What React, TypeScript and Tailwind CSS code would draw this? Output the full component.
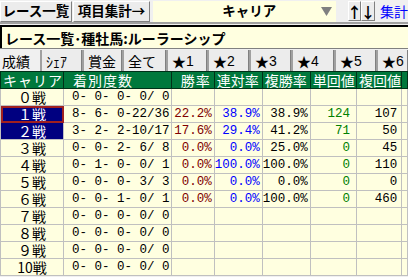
const jp = { fontFamily: '"Noto Sans CJK JP", "Noto Sans", sans-serif' };
const mono = { fontFamily: '"Liberation Mono", "DejaVu Sans Mono", monospace' };

const tabs = [
  ["成績", 40],
  ["ｼｪｱ", 42],
  ["賞金", 40],
  ["全て", 44],
  ["★1", 41],
  ["★2", 42],
  ["★3", 42],
  ["★4", 43],
  ["★5", 42],
  ["★6", 32],
] as const;

type Row = {
  label: string;
  rec: string;
  win?: string;
  ren?: string;
  fuku?: string;
  tan?: string;
  fk?: string;
  sel?: boolean;
  focus?: boolean;
};

const rows: Row[] = [
  { label: "０戦", rec: "0- 0- 0- 0/ 0" },
  { label: "１戦", rec: "8- 6- 0-22/36", win: "22.2%", ren: "38.9%", fuku: "38.9%", tan: "124", fk: "107", sel: true, focus: true },
  { label: "２戦", rec: "3- 2- 2-10/17", win: "17.6%", ren: "29.4%", fuku: "41.2%", tan: "71", fk: "50", sel: true },
  { label: "３戦", rec: "0- 0- 2- 6/ 8", win: "0.0%", ren: "0.0%", fuku: "25.0%", tan: "0", fk: "45" },
  { label: "４戦", rec: "0- 1- 0- 0/ 1", win: "0.0%", ren: "100.0%", fuku: "100.0%", tan: "0", fk: "110" },
  { label: "５戦", rec: "0- 0- 0- 3/ 3", win: "0.0%", ren: "0.0%", fuku: "0.0%", tan: "0", fk: "0" },
  { label: "６戦", rec: "0- 0- 1- 0/ 1", win: "0.0%", ren: "0.0%", fuku: "100.0%", tan: "0", fk: "460" },
  { label: "７戦", rec: "0- 0- 0- 0/ 0" },
  { label: "８戦", rec: "0- 0- 0- 0/ 0" },
  { label: "９戦", rec: "0- 0- 0- 0/ 0" },
  { label: "10戦", rec: "0- 0- 0- 0/ 0" },
];

function RaisedButton({ children, className }: { children: React.ReactNode; className: string }) {
  return (
    <div
      className={`flex items-center justify-center whitespace-nowrap border border-t-white border-l-white border-r-[#808080] border-b-[#808080] bg-[#ececec] font-bold leading-none text-black ${className}`}
    >
      {children}
    </div>
  );
}

export default function App() {
  const cell = "border border-[#c0c0c0] h-[17px] p-0 leading-[16px] whitespace-nowrap align-middle";
  const num = "text-right pr-[2px] text-[12.5px]";
  return (
    <div className="h-[277px] w-[408px] overflow-hidden bg-[#f0f0f0]" style={jp}>
      {/* toolbar */}
      <div className="flex h-[22px] items-center">
        <RaisedButton className="h-[21px] w-[73px] text-[13.5px]">レース一覧</RaisedButton>
        <RaisedButton className="ml-[1px] h-[21px] w-[79px] text-[13.5px]">項目集計→</RaisedButton>
        <div className="ml-[3px] flex h-[21px] w-[186px] items-center bg-[#ffffe0]">
          <span className="flex-1 whitespace-nowrap pl-[24px] text-center text-[13.5px] font-bold leading-none">キャリア</span>
          <svg width="11" height="9" viewBox="0 0 11 9" className="mr-[4px]">
            <path d="M0 0 L11 0 L5.5 9 Z" fill="#808080" />
          </svg>
        </div>
        <RaisedButton className="ml-[12px] h-[20px] w-[13px] text-[15px]">↑</RaisedButton>
        <RaisedButton className="h-[20px] w-[14px] text-[15px]">↓</RaisedButton>
        <span className="ml-[5px] whitespace-nowrap text-[14px] leading-none text-[#0000ff]">集計</span>
      </div>
      <div className="h-[2px] bg-[#a0a0a0]" />
      {/* title */}
      <div className="mt-[1px] flex h-[23px] items-center whitespace-nowrap border-l-2 border-t-2 border-l-black border-t-black bg-[#ffffe0] pl-[3px] text-[14px] font-bold leading-none">
        レース一覧･種牡馬:ルーラーシップ
      </div>
      <div className="h-[1px] bg-[#808080]" />
      {/* tabs */}
      <div className="mt-[1px] flex h-[21px] items-stretch">
        {tabs.map(([t, w], i) => (
          <div
            key={t}
            style={{ width: w }}
            className={
              i === 0
                ? "flex items-center whitespace-nowrap pl-[2px] text-[14px] leading-none"
                : "flex items-center whitespace-nowrap border-l-2 border-r border-l-[#a0a0a0] border-r-[#808080] bg-[#ececec] pl-[4px] text-[14px] leading-none"
            }
          >
            {t.startsWith("★") ? (
              <>
                <span>★</span>
                <span style={{ fontFamily: '"Liberation Sans", sans-serif' }}>{t.slice(1)}</span>
              </>
            ) : (
              t
            )}
          </div>
        ))}
      </div>
      {/* table */}
      <table className="table-fixed border-collapse bg-[#ffffe0] text-[14px]">
        <colgroup>
          <col className="w-[60px]" />
          <col className="w-[110px]" />
          <col className="w-[47px]" />
          <col className="w-[47px]" />
          <col className="w-[47px]" />
          <col className="w-[48px]" />
          <col className="w-[46px]" />
          <col className="w-[10px]" />
        </colgroup>
        <thead>
          <tr className="h-[17px] bg-[#00783c] text-white">
            {["キャリア", "着別度数", "勝率", "連対率", "複勝率", "単回値", "複回値", ""].map((h, i) => (
              <th
                key={i}
                className={`h-[17px] whitespace-nowrap border border-[#003018] p-0 text-left align-middle font-normal leading-[16px] ${
                  i === 0 ? "pl-[2px] tracking-[1px]" : i === 1 ? "pl-[9px] tracking-[1px]" : i === 2 ? "pl-[9px] tracking-[1px]" : "pl-[2px]"
                }`}
              >
                {h}
              </th>
            ))}
          </tr>
        </thead>
        <tbody>
          {rows.map((r) => (
            <tr key={r.label} className="h-[17px]">
              <td
                className={`${cell} text-center ${
                  r.sel ? "bg-[#000080] text-white" : ""
                } ${r.focus ? "outline-2 -outline-offset-2 outline-[#a02020]" : ""}`}
              >
                {r.label}
              </td>
              <td className={`${cell} pl-[8px] text-[12.5px] whitespace-pre`} style={mono}>
                {r.rec}
              </td>
              <td className={`${cell} ${num} text-[#800000]`} style={mono}>{r.win}</td>
              <td className={`${cell} ${num} text-[#0000ff]`} style={mono}>{r.ren}</td>
              <td className={`${cell} ${num} text-black`} style={mono}>{r.fuku}</td>
              <td className={`${cell} ${num} pr-[6px] text-[#008000]`} style={mono}>{r.tan}</td>
              <td className={`${cell} ${num} pr-[4px] text-black`} style={mono}>{r.fk}</td>
              <td className={cell} />
            </tr>
          ))}
        </tbody>
      </table>
    </div>
  );
}
